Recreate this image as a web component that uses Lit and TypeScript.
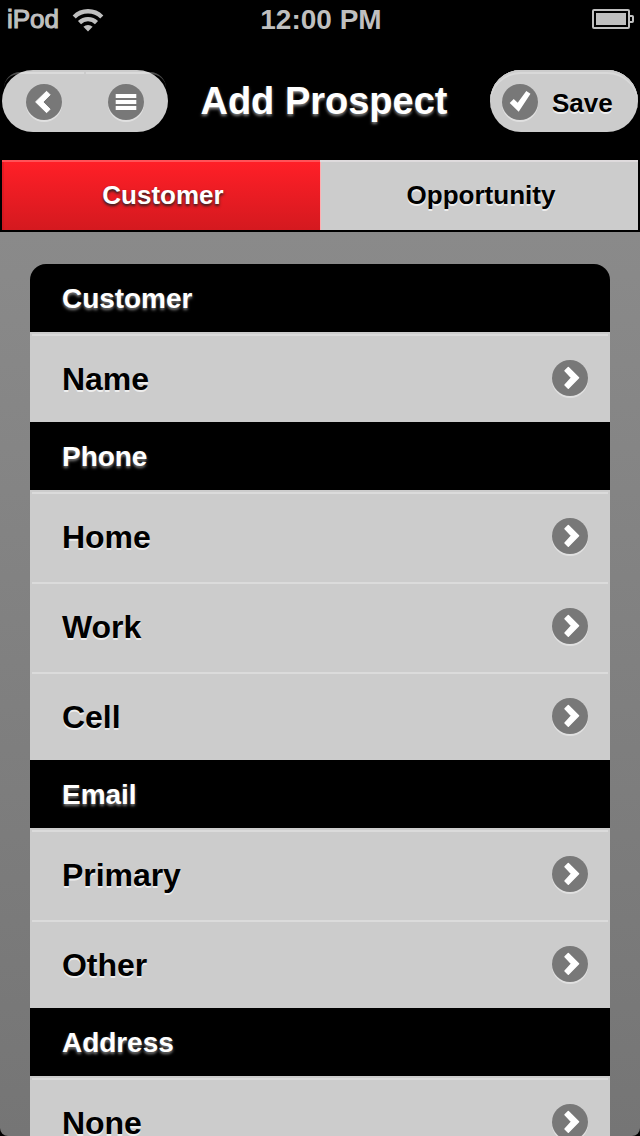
import { LitElement, html, svg, css } from "lit";
import { customElement, property } from "lit/decorators.js";

type Glyph = "back" | "menu" | "check" | "next";

const glyphs = {
  back: svg`<path d="M9.6 17.9 20.6 7.3 24.1 10.8 16.9 18 24.1 25.2 20.6 28.7z" fill="#fff" stroke="#fff" stroke-linejoin="round"/>`,
  menu: svg`<path d="M7.7 12h20.6M7.7 18h20.6M7.7 24h20.6" fill="none" stroke="#fff" stroke-width="4"/>`,
  check: svg`<path d="M7.7 19 11.7 15 15.7 18.7 24.3 6.9 28.5 9.8 16.7 27.8z" fill="#fff"/>`,
  next: svg`<path d="M13 10.7 16.3 7.4 26.6 17.8 16.3 28.3 13 25 19.6 17.8z" fill="#fff" stroke="#fff" stroke-width="1.4" stroke-linejoin="round"/>`,
};

@customElement("disc-icon")
export class DiscIcon extends LitElement {
  @property() glyph: Glyph = "next";

  static styles = css`
    :host {
      display: block;
      flex: none;
      width: 36px;
      height: 36px;
      border-radius: 50%;
      background: #787878;
      box-shadow: 0 2px 0 rgba(255, 255, 255, 0.4);
    }
    .glyph {
      display: block;
    }
  `;

  render() {
    return html`<svg class="glyph" width="36" height="36" viewBox="0 0 36 36">${glyphs[this.glyph]}</svg>`;
  }
}

@customElement("list-section")
export class ListSection extends LitElement {
  @property() heading = "";
  @property({ attribute: false }) rows: string[] = [];

  static styles = css`
    :host {
      display: block;
    }
    .heading {
      height: 68px;
      padding-left: 32px;
      background: #000;
      color: #fff;
      font-size: 28px;
      letter-spacing: -0.05px;
      line-height: 69px;
      text-shadow: 0 2px 3px rgba(255, 255, 255, 0.5);
    }
    .row {
      box-sizing: border-box;
      height: 90px;
      padding: 2px 2px 0;
      background: #ccc;
    }
    .inner {
      display: flex;
      align-items: center;
      justify-content: space-between;
      box-sizing: border-box;
      height: 88px;
      padding: 0 20px 0 30px;
      border-top: 2px solid #dbdbdb;
      color: #000;
      font-size: 32px;
      letter-spacing: -0.05px;
      line-height: 86px;
      text-shadow: 0 2px 0 #eee;
    }
    .label {
      display: block;
    }
    .inner disc-icon {
      margin-bottom: 2px;
    }
  `;

  render() {
    return html`
      <div class="heading">${this.heading}</div>
      ${this.rows.map(
        (row) => html`<div class="row">
          <div class="inner"><span class="label">${row}</span><disc-icon glyph="next"></disc-icon></div>
        </div>`
      )}
    `;
  }
}

@customElement("app-root")
export class AppRoot extends LitElement {
  sections = [
    { heading: "Customer", rows: ["Name"] },
    { heading: "Phone", rows: ["Home", "Work", "Cell"] },
    { heading: "Email", rows: ["Primary", "Other"] },
    { heading: "Address", rows: ["None"] },
  ];

  static styles = css`
    :host {
      display: flex;
      flex-direction: column;
      width: 640px;
      height: 1136px;
      overflow: hidden;
      background: #000;
      font-family: "Liberation Sans", Arial, sans-serif;
      font-weight: bold;
    }
    .status {
      display: grid;
      grid-template-columns: 1fr auto 1fr;
      align-items: start;
      flex: none;
      height: 40px;
      color: #bfbfbf;
      line-height: 40px;
    }
    .carrier {
      display: flex;
      padding-left: 7px;
      gap: 13px;
      font-size: 26px;
      font-weight: normal;
      line-height: 38px;
      -webkit-text-stroke: 1.1px #bfbfbf;
    }
    .wifi {
      margin-top: 7px;
    }
    .clock {
      font-size: 28px;
      padding-left: 2px;
    }
    .battery {
      justify-self: end;
      margin: 9px 6px 0 0;
    }
    .bar {
      display: grid;
      grid-template-columns: 166px 1fr 148px;
      flex: none;
      box-sizing: border-box;
      height: 120px;
      padding: 30px 2px 0;
    }
    .pill {
      display: flex;
      box-sizing: border-box;
      height: 62px;
      border-radius: 31px;
      background: #ccc;
    }
    .group {
      gap: 2px;
      padding: 2px;
    }
    .half {
      display: flex;
      align-items: flex-start;
      box-sizing: border-box;
      width: 80px;
      height: 58px;
      padding: 10px 22px 0;
      border-top: 2px solid rgba(255, 255, 255, 0.3);
      border-radius: 16px 0 0 0;
    }
    .half.right {
      border-radius: 0 16px 0 0;
    }
    .save {
      align-items: flex-start;
      gap: 14px;
      padding: 14px 0 0 12px;
      color: #000;
      font-size: 26px;
      line-height: 38px;
      text-shadow: 0 2px 0 #eee;
      box-shadow: inset 0 2px 0 #ccc, inset 0 4px 0 #d9d9d9;
    }
    .title {
      text-align: center;
      color: #fff;
      font-size: 38px;
      line-height: 62px;
      padding-right: 10px;
      white-space: nowrap;
      text-shadow: 0 2px 3px rgba(255, 255, 255, 0.5);
    }
    .tabs {
      display: grid;
      grid-template-columns: 318px 318px;
      flex: none;
      height: 70px;
      padding: 0 2px 2px;
    }
    .tab {
      box-sizing: border-box;
      border-top: 2px solid #dfdbdd;
      background: #ccc;
      color: #000;
      font-size: 26px;
      line-height: 67px;
      text-align: center;
      padding-left: 4px;
      text-shadow: 0 2px 0 #eee;
      box-shadow: inset 1px 0 0 #ffadb0;
    }
    .tab.active {
      border-top-color: #ff5258;
      background: linear-gradient(#ff1f27, #d4191f);
      color: #fff;
      text-shadow: 0 2px 3px #222;
      box-shadow: inset 2px 0 0 rgba(190, 20, 30, 0.3);
    }
    .content {
      flex: 1;
      min-height: 0;
      box-sizing: border-box;
      padding: 32px 30px 0;
      overflow: hidden;
      border-radius: 0 0 8px 8px;
      background: linear-gradient(#8a8a8a, #757575);
    }
    .list {
      overflow: hidden;
      border-radius: 16px 16px 0 0;
    }
  `;

  render() {
    return html`
      <div class="status">
        <div class="carrier">
          <span>iPod</span>
          <svg class="wifi" width="32" height="25" viewBox="0 0 32 25">
            <g fill="none" stroke="#bfbfbf" stroke-width="4.4">
              <path d="M2.2 10a19.6 19.6 0 0 1 27.6 0" />
              <path d="M7.5 15.6a12.2 12.2 0 0 1 17 0" />
            </g>
            <path d="M11.4 19.8a6.6 6.6 0 0 1 9.2 0L16 24.4z" fill="#bfbfbf" />
          </svg>
        </div>
        <div class="clock">12:00 PM</div>
        <svg class="battery" width="42" height="20" viewBox="0 0 42 20">
          <rect x="1" y="1" width="36" height="18" rx="1" fill="none" stroke="#bfbfbf" stroke-width="2" />
          <rect x="4" y="4" width="30" height="12" fill="#bfbfbf" />
          <path d="M38 7h2.2q.8 0 .8.8v4.4q0 .8-.8.8H38" fill="none" stroke="#bfbfbf" stroke-width="2" />
        </svg>
      </div>
      <div class="bar">
        <div class="pill group">
          <div class="half"><disc-icon glyph="back"></disc-icon></div>
          <div class="half right"><disc-icon glyph="menu"></disc-icon></div>
        </div>
        <div class="title">Add Prospect</div>
        <div class="pill save">
          <disc-icon glyph="check"></disc-icon><span>Save</span>
        </div>
      </div>
      <div class="tabs">
        <div class="tab active">Customer</div>
        <div class="tab">Opportunity</div>
      </div>
      <div class="content">
        <div class="list">
          ${this.sections.map((s) => html`<list-section .heading=${s.heading} .rows=${s.rows}></list-section>`)}
        </div>
      </div>
    `;
  }
}
